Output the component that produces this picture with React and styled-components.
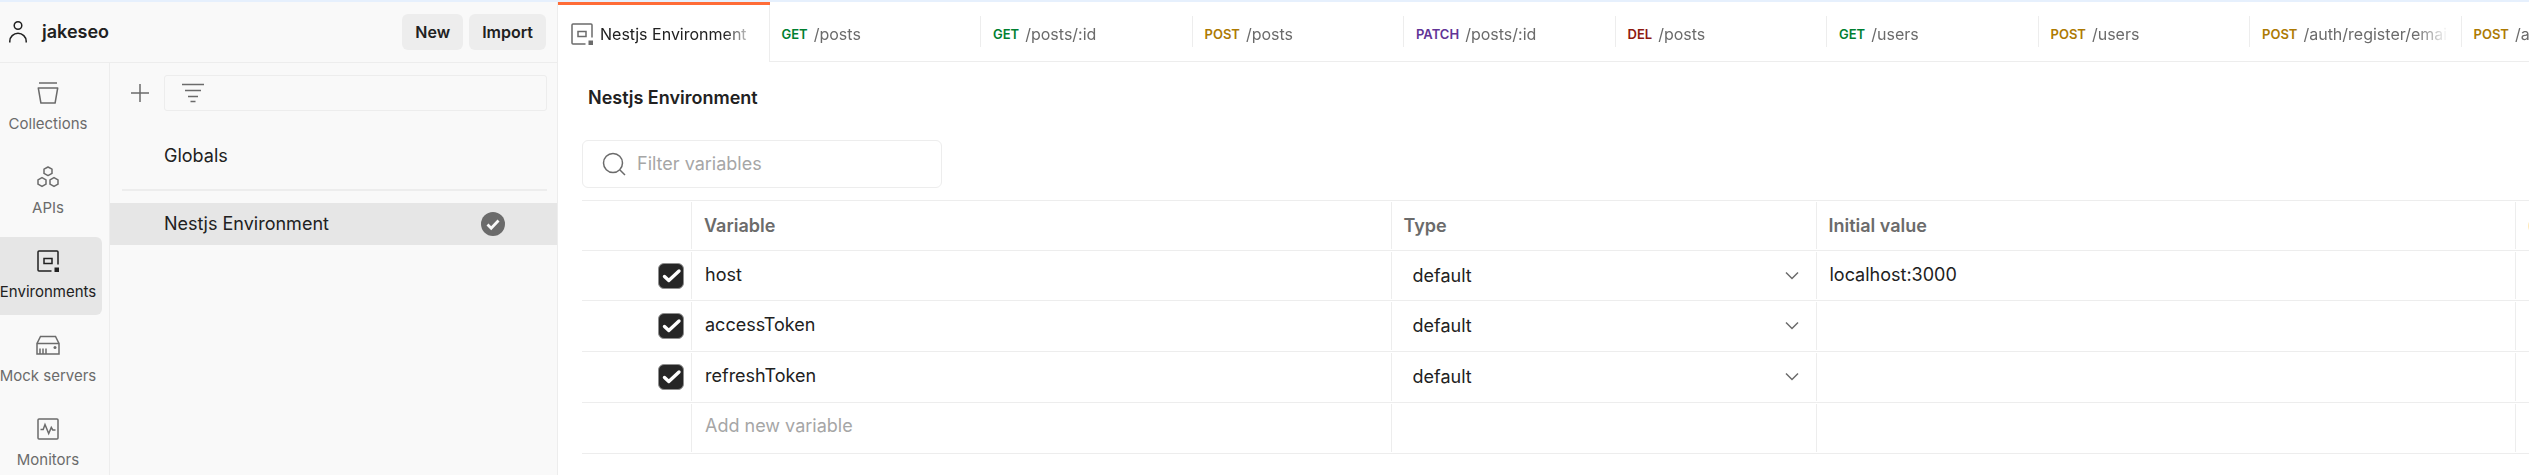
import React from "react";
import styled, { createGlobalStyle, css } from "styled-components";

const color = {
  text: "#212121",
  muted: "#6b6b6b",
  faint: "#a6a6a6",
  line: "#ededed",
  panel: "#f9f9f9",
  selected: "#e6e6e6",
  accent: "#ff6c37",
  strip: "#e6f0fd",
};

const methodColor = {
  GET: "#007f31",
  POST: "#ad7a03",
  PATCH: "#623497",
  DEL: "#8e1a10",
};

const GlobalStyle = createGlobalStyle`
  *, *::before, *::after { box-sizing: border-box; }
  body {
    margin: 0;
    overflow: hidden;
    background: #fff;
    color: ${color.text};
    font: 400 18px/24px Inter, "Noto Sans", sans-serif;
  }
  button, input, select { font: inherit; color: inherit; margin: 0; }
  svg { display: block; flex: none; }
`;

const Shell = styled.div`
  display: flex;
  height: 100vh;
  border-top: 2px solid ${color.strip};
`;

const Sidebar = styled.aside`
  display: flex;
  flex-direction: column;
  flex: none;
  width: 558px;
  background: ${color.panel};
  border-right: 1px solid ${color.line};
`;

const WorkspaceBar = styled.header`
  display: flex;
  align-items: center;
  gap: 6px;
  flex: none;
  height: 61px;
  padding: 0 11px 0 8px;
  border-bottom: 1px solid ${color.line};
`;

const WorkspaceName = styled.div`
  display: flex;
  align-items: center;
  gap: 14px;
  flex: 1;
  font-weight: 600;
`;

const ActionButton = styled.button`
  height: 36px;
  padding: 0 13px;
  border: 0;
  border-radius: 6px;
  background: ${color.line};
  font-size: 16px;
  font-weight: 600;
`;

const SidebarBody = styled.div`
  display: flex;
  flex: 1;
  min-height: 0;
`;

const Rail = styled.nav`
  display: flex;
  flex-direction: column;
  gap: 6px;
  flex: none;
  width: 110px;
  padding: 6px 7px 0 0;
  overflow: hidden;
  border-right: 1px solid ${color.line};
`;

const RailButton = styled.button`
  display: flex;
  flex-direction: column;
  align-items: center;
  gap: 9px;
  flex: none;
  height: 78px;
  padding: 12px 6px 0 0;
  border: 0;
  border-radius: 0 6px 6px 0;
  background: ${(p) => (p.$active ? color.selected : "transparent")};
  color: ${(p) => (p.$active ? color.text : color.muted)};
  font-size: 15px;
  line-height: 20px;
  white-space: nowrap;
`;

const EnvironmentPanel = styled.section`
  flex: 1;
  min-width: 0;
`;

const PanelTools = styled.div`
  display: flex;
  align-items: center;
  gap: 12px;
  padding: 12px 10px 0 18px;
`;

const IconButton = styled.button`
  display: flex;
  padding: 0;
  border: 0;
  background: none;
  color: ${color.muted};
`;

const inputBox = css`
  display: flex;
  align-items: center;
  border: 1px solid ${color.line};
  color: ${color.muted};
`;

const SidebarFilter = styled.label`
  ${inputBox}
  flex: 1;
  gap: 12px;
  height: 36px;
  padding: 0 16px;
  border-radius: 3px;
`;

const BareInput = styled.input`
  display: block;
  width: 100%;
  min-width: 0;
  padding: 0;
  border: 0;
  outline: 0;
  background: none;
  color: ${color.text};
  &::placeholder { color: ${color.faint}; opacity: 1; }
`;

const EnvironmentList = styled.div`
  display: flex;
  flex-direction: column;
  padding-top: 24px;
`;

const EnvironmentItem = styled.button`
  display: flex;
  align-items: center;
  justify-content: space-between;
  height: 42px;
  padding: 0 52px 0 54px;
  border: 0;
  background: ${(p) => (p.$active ? color.selected : "transparent")};
  text-align: left;
`;

const Divider = styled.hr`
  width: auto;
  height: 2px;
  margin: 12px 10px 12px 12px;
  border: 0;
  background: ${color.line};
`;

const Main = styled.main`
  display: flex;
  flex-direction: column;
  flex: 1;
  min-width: 0;
  overflow: hidden;
`;

const TabStrip = styled.div`
  display: flex;
  flex: none;
  height: 60px;
  margin-right: -144px;
`;

const Tab = styled.button`
  display: flex;
  align-items: center;
  flex: 1 1 0;
  min-width: 0;
  padding: 4px 0 0 12px;
  border: 0;
  border-bottom: 1px solid ${color.line};
  background: linear-gradient(${color.line}, ${color.line}) right 14px / 1px 31px no-repeat;
  color: ${color.muted};
  font-size: 16px;
  text-align: left;

  ${(p) =>
    p.$active &&
    css`
      border-top: 3px solid ${color.accent};
      border-bottom: 0;
      padding: 0 0 0 12px;
      background: linear-gradient(${color.line}, ${color.line}) right top / 1px 100% no-repeat;
      color: ${color.text};
      svg { color: ${color.muted}; }
    `}
`;

const TabLabel = styled.span`
  flex: 1;
  margin: 0 14px 0 6px;
  overflow: hidden;
  white-space: nowrap;
  mask-image: linear-gradient(to left, transparent, #000 32px);
`;

const Method = styled.span`
  color: ${(p) => methodColor[p.$method]};
  font-size: 13px;
  font-weight: 600;
`;

const Title = styled.h1`
  margin: 24px 0 30px 30px;
  font-size: 18px;
  line-height: 24px;
  font-weight: 600;
`;

const VariableFilter = styled.label`
  ${inputBox}
  flex: none;
  gap: 11px;
  width: 360px;
  height: 48px;
  margin: 0 0 12px 24px;
  padding: 0 19px;
  border-radius: 6px;
`;

const Table = styled.table`
  width: calc(100% - 24px);
  margin-left: 24px;
  table-layout: fixed;
  border-collapse: separate;
  border-spacing: 0;
  border-top: 1px solid ${color.line};
`;

const columnRule = css`
  border-bottom: 1px solid ${color.line};
  background: linear-gradient(${color.line}, ${color.line}) right center / 1px calc(100% - 2px) no-repeat;
`;

const HeadCell = styled.th`
  ${columnRule}
  height: 50px;
  padding: 0 12px;
  overflow: hidden;
  color: ${color.muted};
  font-weight: 600;
  text-align: left;
  &:last-child { background: none; }
`;

const Cell = styled.td`
  ${columnRule}
  height: 51px;
  padding: 0 13px 2px;
  overflow: hidden;
  tr:first-child > & { height: 50px; }
  tr:last-child > & { padding-bottom: 4px; }
  &:last-child { background: none; }
`;

const CheckLabel = styled.label`
  display: grid;
  justify-content: end;
  margin-right: -5px;
  padding-top: 2px;
  > * { grid-area: 1 / 1; }
`;

const CheckBox = styled.input`
  appearance: none;
  width: 26px;
  height: 26px;
  border: 1px solid #8f8f8f;
  border-radius: 6px;
  &:checked { background: #262626; }
  & + svg { visibility: hidden; color: #fff; pointer-events: none; }
  &:checked + svg { visibility: visible; }
`;

const TypePicker = styled.label`
  display: grid;
  align-items: center;
  padding: 2px 4px 0 8px;
  > * { grid-area: 1 / 1; }
  svg { justify-self: end; color: ${color.muted}; pointer-events: none; }
`;

const TypeSelect = styled.select`
  appearance: none;
  width: 100%;
  padding: 0;
  border: 0;
  outline: 0;
  background: none;
`;

const Icon = ({ size = 24, children }) => (
  <svg width={size} height={size} viewBox={`0 0 ${size} ${size}`} fill="none" stroke="currentColor" strokeWidth="1.5" aria-hidden="true">
    {children}
  </svg>
);

const UserIcon = () => (
  <svg width="20" height="24" viewBox="0 0 20 24" fill="none" stroke={color.text} strokeWidth="1.5" aria-hidden="true">
    <circle cx="10" cy="5.500" r="3.800" />
    <path d="M1.800 22.500v-1.200a8.200 8 0 0 1 16.400 0v1.200" />
  </svg>
);
const CollectionsIcon = () => (
  <Icon>
    <path d="M3 2h18M2.300 7h19.400l-2.600 15H4.900z" strokeLinejoin="round" />
  </Icon>
);
const ApisIcon = () => (
  <Icon>
    <path d="M12 2l4 2.200v4.200l-4 2.200-4-2.200V4.200zM6 12.600l4 2.200v4.400l-4 2.200-4-2.200v-4.400zM18 12.600l4 2.200v4.400l-4 2.200-4-2.200v-4.400z" strokeLinejoin="round" />
  </Icon>
);
const EnvironmentIcon = () => (
  <Icon>
    <path d="M22 15.500V3a1 1 0 0 0-1-1H3a1 1 0 0 0-1 1v18a1 1 0 0 0 1 1h12.500" />
    <path d="M8 9.500h8v5H8z" />
    <path d="M18.500 18.500H23V23h-4.500z" fill="currentColor" stroke="none" />
  </Icon>
);
const MockIcon = () => (
  <Icon>
    <path d="M1 10.500h22V21H1zM1 10.500l3.500-7h15l3.500 7M4 21v-5.500M7 21v-5.500M10 21v-5.500" />
    <circle cx="19" cy="14.500" r="1.500" fill="currentColor" stroke="none" />
  </Icon>
);
const MonitorIcon = () => (
  <Icon>
    <rect x="2" y="2" width="20" height="20" rx="1" />
    <path d="M4.500 12.500h2.700L9 7.500l3.700 9 2.600-6 1.500 2.500h2.700" />
  </Icon>
);
const PlusIcon = () => (
  <Icon>
    <path d="M12 3v18M3 12h18" />
  </Icon>
);
const FilterIcon = () => (
  <Icon>
    <path d="M1 3.500h22M4 9.500h16M7 15.500h10M9.500 20.500h5" />
  </Icon>
);
const SearchIcon = () => (
  <Icon>
    <circle cx="11" cy="11" r="9.500" />
    <path d="M18 18l5 5" />
  </Icon>
);
const ChevronIcon = () => (
  <Icon size={16}>
    <path d="M2 4.500l6 6 6-6" />
  </Icon>
);
const TickIcon = () => (
  <svg width="26" height="26" viewBox="0 0 26 26" fill="none" stroke="currentColor" strokeWidth="3.400" strokeLinecap="round" strokeLinejoin="round" aria-hidden="true">
    <path d="M6.500 13.500l4.300 4L21 8" />
  </svg>
);
const ActiveIcon = () => (
  <svg width="24" height="24" viewBox="0 0 24 24" fill="none" aria-hidden="true">
    <circle cx="12" cy="12" r="12" fill={color.muted} />
    <path d="M6.500 12.500l3.700 3.700L17.500 8.500" stroke={color.panel} strokeWidth="2.800" />
  </svg>
);
const NoticeIcon = () => (
  <svg width="18" height="18" viewBox="0 0 18 18" fill="none" aria-hidden="true">
    <circle cx="9" cy="9" r="9" fill="#ffe9b8" />
  </svg>
);

const railItems = [
  ["Collections", CollectionsIcon],
  ["APIs", ApisIcon],
  ["Environments", EnvironmentIcon],
  ["Mock servers", MockIcon],
  ["Monitors", MonitorIcon],
];

const requestTabs = [
  ["GET", "/posts"],
  ["GET", "/posts/:id"],
  ["POST", "/posts"],
  ["PATCH", "/posts/:id"],
  ["DEL", "/posts"],
  ["GET", "/users"],
  ["POST", "/users"],
  ["POST", "/auth/register/email"],
  ["POST", "/auth/login/email"],
];

const variables = [
  { name: "host", initial: "localhost:3000" },
  { name: "accessToken", initial: "" },
  { name: "refreshToken", initial: "" },
];

const VariableRow = ({ name, initial }) => (
  <tr>
    <Cell>
      <CheckLabel>
        <CheckBox type="checkbox" defaultChecked aria-label={`Enable ${name}`} />
        <TickIcon />
      </CheckLabel>
    </Cell>
    <Cell>
      <BareInput defaultValue={name} aria-label="Variable name" />
    </Cell>
    <Cell>
      <TypePicker>
        <TypeSelect defaultValue="default" aria-label={`Type of ${name}`}>
          <option>default</option>
          <option>secret</option>
        </TypeSelect>
        <ChevronIcon />
      </TypePicker>
    </Cell>
    <Cell>
      <BareInput defaultValue={initial} aria-label={`Initial value of ${name}`} />
    </Cell>
    <Cell />
  </tr>
);

export default function App() {
  return (
    <>
      <GlobalStyle />
      <Shell>
        <Sidebar>
          <WorkspaceBar>
            <WorkspaceName>
              <UserIcon />
              jakeseo
            </WorkspaceName>
            <ActionButton type="button">New</ActionButton>
            <ActionButton type="button">Import</ActionButton>
          </WorkspaceBar>
          <SidebarBody>
            <Rail>
              {railItems.map(([label, Glyph]) => (
                <RailButton key={label} type="button" $active={label === "Environments"}>
                  <Glyph />
                  {label}
                </RailButton>
              ))}
            </Rail>
            <EnvironmentPanel>
              <PanelTools>
                <IconButton type="button" aria-label="Create environment">
                  <PlusIcon />
                </IconButton>
                <SidebarFilter>
                  <FilterIcon />
                  <BareInput aria-label="Filter environments" />
                </SidebarFilter>
              </PanelTools>
              <EnvironmentList>
                <EnvironmentItem type="button">Globals</EnvironmentItem>
                <Divider />
                <EnvironmentItem type="button" $active>
                  Nestjs Environment
                  <ActiveIcon />
                </EnvironmentItem>
              </EnvironmentList>
            </EnvironmentPanel>
          </SidebarBody>
        </Sidebar>
        <Main>
          <TabStrip role="tablist">
            <Tab type="button" role="tab" aria-selected="true" $active>
              <EnvironmentIcon />
              <TabLabel>Nestjs Environment</TabLabel>
            </Tab>
            {requestTabs.map(([method, path]) => (
              <Tab key={method + path} type="button" role="tab" aria-selected="false">
                <Method $method={method}>{method}</Method>
                <TabLabel>{path}</TabLabel>
              </Tab>
            ))}
          </TabStrip>
          <Title>Nestjs Environment</Title>
          <VariableFilter>
            <SearchIcon />
            <BareInput placeholder="Filter variables" aria-label="Filter variables" />
          </VariableFilter>
          <Table>
            <colgroup>
              <col width="110" />
              <col />
              <col width="425" />
              <col />
              <col width="13" />
            </colgroup>
            <thead>
              <tr>
                <HeadCell />
                <HeadCell scope="col">Variable</HeadCell>
                <HeadCell scope="col">Type</HeadCell>
                <HeadCell scope="col">Initial value</HeadCell>
                <HeadCell>
                  <NoticeIcon />
                </HeadCell>
              </tr>
            </thead>
            <tbody>
              {variables.map((v) => (
                <VariableRow key={v.name} {...v} />
              ))}
              <tr>
                <Cell />
                <Cell>
                  <BareInput placeholder="Add new variable" aria-label="Add new variable" />
                </Cell>
                <Cell />
                <Cell />
                <Cell />
              </tr>
            </tbody>
          </Table>
        </Main>
      </Shell>
    </>
  );
}
